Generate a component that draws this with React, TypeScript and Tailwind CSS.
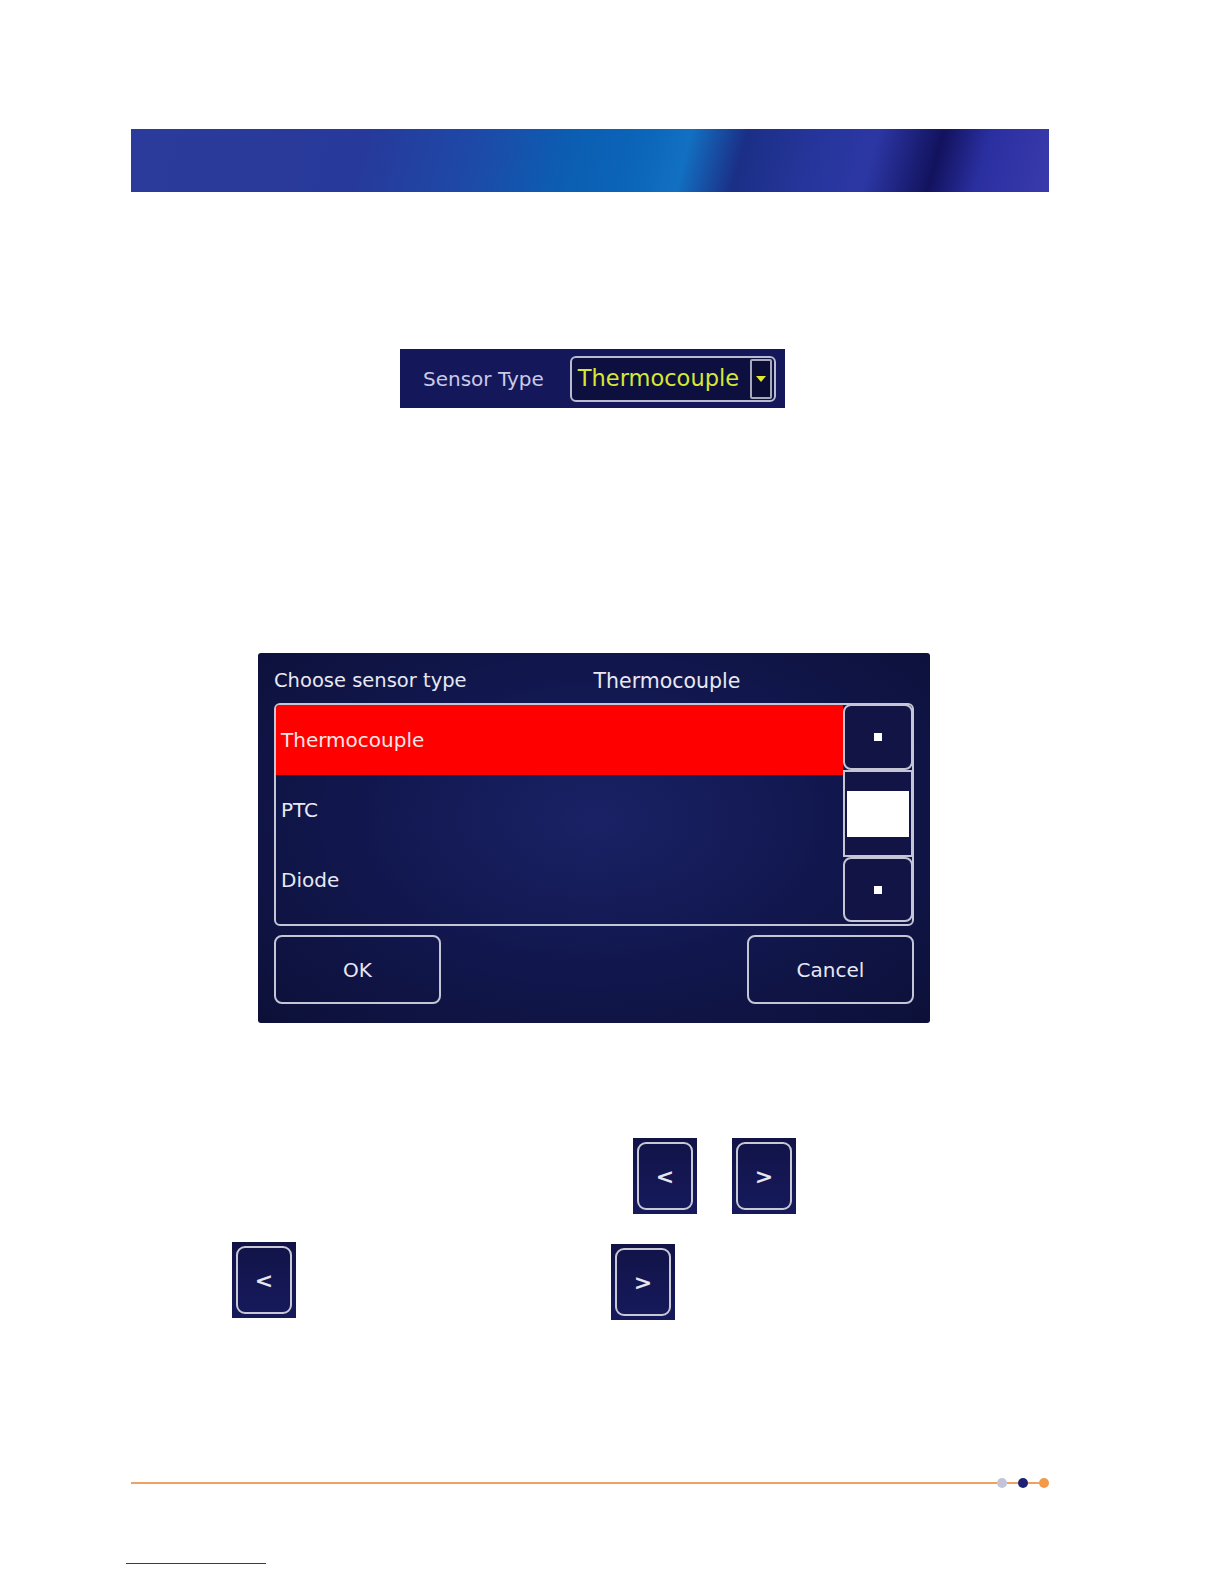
import React from "react";

const font = { fontFamily: '"DejaVu Sans", "Liberation Sans", sans-serif' };

function NavButton({ glyph }: { glyph: string }) {
  return (
    <div className="w-[64px] h-[76px] p-[4px] bg-[linear-gradient(180deg,#111347_0%,#161a5c_100%)]">
      <div className="w-full h-full rounded-[9px] border-2 border-[#c9c9d6] flex items-center justify-center text-[#e6e6f0] text-[22px] font-bold">
        {glyph}
      </div>
    </div>
  );
}

export default function App() {
  return (
    <div className="w-[1224px] h-[1584px] bg-white overflow-hidden" style={font}>
      <div className="h-[129px]" />
      {/* Banner */}
      <div className="ml-[131px] w-[918px] h-[63px] bg-[linear-gradient(105deg,#2b3b9b_0%,#27399a_25%,#1d4aa8_38%,#0c5db2_47%,#0b65b8_55%,#1270c2_60%,#1b2f86_66%,#26359c_74%,#2c37a4_80%,#12125e_87%,#2a2fa0_92%,#3a3aac_100%)]" />
      <div className="h-[157px]" />
      {/* Sensor Type widget */}
      <div className="ml-[400px] w-[385px] h-[59px] bg-[#15175b] flex items-center">
        <span className="ml-[23px] text-[20px] text-[#c9cae6] leading-none">Sensor Type</span>
        <div className="ml-[26px] w-[206px] h-[46px] rounded-[6px] border-2 border-[#b9bbd0] bg-[#0d0f3e] flex items-center">
          <span className="ml-[6px] text-[22.5px] text-[#d6e834] leading-none">Thermocouple</span>
          <div className="ml-auto mr-[2px] w-[22px] h-[40px] border-2 border-[#a7a9bd] rounded-[2px] bg-[#0b0d34] flex items-center justify-center">
            <svg width="10" height="6" viewBox="0 0 10 6">
              <polygon points="0,0 10,0 5,6" fill="#e0e830" />
            </svg>
          </div>
        </div>
      </div>
      <div className="h-[245px]" />
      {/* Dialog */}
      <div className="ml-[258px] w-[672px] h-[370px] rounded-[3px] bg-[radial-gradient(ellipse_at_50%_45%,#1a2266_0%,#121850_45%,#0c1038_100%)] px-[16px] pt-[12px] text-[#e8e8f2]">
        <div className="h-[32px] flex items-center">
          <span className="text-[19.5px] leading-none">Choose sensor type</span>
          <span className="ml-[127px] text-[20.5px] leading-none">Thermocouple</span>
        </div>
        <div className="mt-[6px] w-[640px] h-[223px] rounded-[6px] border-2 border-[#c4c6d6] flex">
          <div className="flex-1 flex flex-col">
            <div className="h-[70px] bg-[#ff0000] flex items-center pl-[5px] text-[20px] text-[#f6e6e6] rounded-tl-[4px]">Thermocouple</div>
            <div className="h-[70px] flex items-center pl-[5px] text-[20px]">PTC</div>
            <div className="h-[70px] flex items-center pl-[5px] text-[20px]">Diode</div>
          </div>
          <div className="w-[70px] flex flex-col -mt-[1px] -mr-[1px]">
            <div className="h-[66px] rounded-[8px] border-2 border-[#c4c6d6] bg-[#111445] flex items-center justify-center">
              <div className="w-[8px] h-[8px] bg-white" />
            </div>
            <div className="h-[87px] border-2 border-[#c4c6d6] bg-[#111445] flex items-center justify-center">
              <div className="w-[62px] h-[46px] bg-white" />
            </div>
            <div className="h-[65px] rounded-[8px] border-2 border-[#c4c6d6] bg-[#111445] flex items-center justify-center">
              <div className="w-[8px] h-[8px] bg-white" />
            </div>
          </div>
        </div>
        <div className="mt-[9px] flex justify-between">
          <div className="w-[167px] h-[69px] rounded-[8px] border-2 border-[#c4c6d6] flex items-center justify-center text-[20px]">OK</div>
          <div className="w-[167px] h-[69px] rounded-[8px] border-2 border-[#c4c6d6] flex items-center justify-center text-[20px]">Cancel</div>
        </div>
      </div>
      <div className="h-[115px]" />
      {/* Nav row 1 */}
      <div className="flex ml-[633px] gap-[35px] h-[76px]">
        <NavButton glyph="<" />
        <NavButton glyph=">" />
      </div>
      <div className="h-[28px]" />
      {/* Nav row 2 */}
      <div className="flex ml-[232px] h-[76px]">
        <NavButton glyph="<" />
        <div className="ml-[315px] mt-[2px]">
          <NavButton glyph=">" />
        </div>
      </div>
      <div className="h-[159px]" />
      {/* Footer */}
      <div className="ml-[131px] w-[920px] h-[12px] flex items-center">
        <div className="w-[866px] h-[2px] bg-[#f0a060]" />
        <div className="w-[10px] h-[10px] rounded-full bg-[#c4c4d8]" />
        <div className="w-[11px] h-[2px] bg-[#f0a060]" />
        <div className="w-[10px] h-[10px] rounded-full bg-[#1d2275]" />
        <div className="w-[11px] h-[2px] bg-[#f0a060]" />
        <div className="w-[10px] h-[10px] rounded-full bg-[#f39a4a]" />
      </div>
      <div className="h-[74px]" />
      <div className="ml-[126px] w-[140px] h-[1px] bg-[#2a3590]" />
    </div>
  );
}
